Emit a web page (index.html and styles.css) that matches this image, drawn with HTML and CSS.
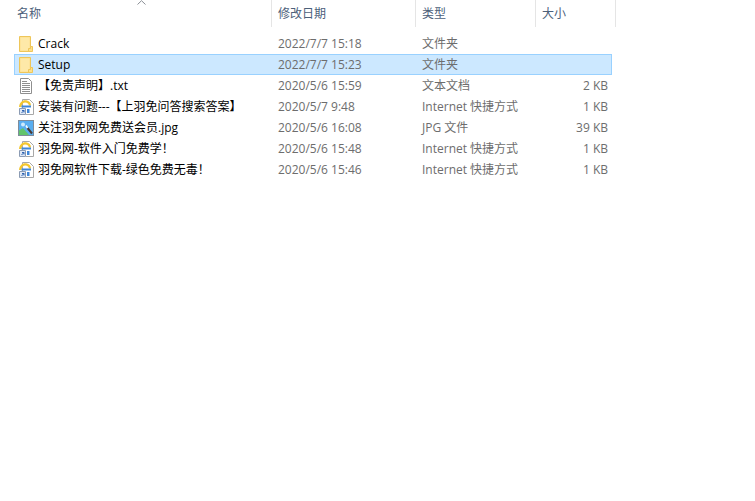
FILE: index.html
```html
<!DOCTYPE html>
<html lang="zh">
<head>
<meta charset="utf-8">
<title>文件列表</title>
<link rel="stylesheet" href="styles.css">
</head>
<body>
<svg class="defs" width="0" height="0" aria-hidden="true">
  <defs>
    <symbol id="folder" viewBox="0 0 16 16">
      <path d="M1.500 .5H12.500V15.500H1.500Z" fill="#fde08a" stroke="#eec65a"/>
      <path d="M2.500 1.500H11.500V14.500H2.500Z" fill="#fee9a8"/>
      <path d="M12.500 10.500H14.500V15.500H10.500V12.500H12.500Z" fill="#fde08a" stroke="#eec65a"/>
    </symbol>
    <symbol id="txt" viewBox="0 0 16 16">
      <path d="M2.500 .5H10.500L13.500 3.500V15.500H2.500Z" fill="#fff" stroke="#8f8f8f"/>
      <path d="M4 3.500H9M4 5.500H12M4 7.500H12M4 9.500H12M4 11.500H12M4 13.500H12" stroke="#8f8f8f"/>
    </symbol>
    <symbol id="link" viewBox="0 0 16 16">
      <path d="M4.500 .5H11.500L15.500 4.500V15.500H4.500Z" fill="#fff" stroke="#a8a8a8"/>
      <path d="M1 8C1.500 3 5 .5 9 1.500C11.500 2 13 4 13 6.500H11C10.500 4.500 9 3.500 7.500 3.500C5 3.500 3.500 5.500 3.500 8Z" fill="#f3c62f"/>
      <path d="M3.500 6.500H13V8.500H3.500Z" fill="#3f86d8"/>
      <rect x="1" y="9" width="7" height="7" fill="#fff"/>
      <path d="M1.500 9.500H7.500V15.500H1.500Z" fill="#dfe8f5" stroke="#8b9bb3"/>
      <path d="M3.500 14L6 11.500M4 11.500H6V13.500" stroke="#2f63b0" fill="none"/>
      <path d="M9 10H11.500V14H9Z" fill="#3f86d8"/>
    </symbol>
    <symbol id="jpg" viewBox="0 0 16 16">
      <rect x=".5" y=".5" width="15" height="15" fill="#5aaef0" stroke="#7f8c9a"/>
      <path d="M1 10.500L5 8L11 15H1Z" fill="#62c46a"/>
      <circle cx="5" cy="4.500" r="2" fill="#cfeafc"/>
      <path d="M9.500 8L14 13.500" stroke="#4a3b35" stroke-width="2"/>
      <path d="M8 5.500L9.500 8" stroke="#fff" stroke-width="1.500"/>
    </symbol>
  </defs>
</svg>
<main class="explorer">
  <header class="head">
    <svg class="sort" width="9" height="5" viewBox="0 0 9 5"><path d="M.5 4.500L4.500 .7L8.500 4.500" fill="none" stroke="#8a8f96"/></svg>
    <div class="hcell hname">名称</div>
    <div class="hcell hdate">修改日期</div>
    <div class="hcell htype">类型</div>
    <div class="hcell hsize">大小</div>
  </header>
  <section class="list">
    <div class="row"><span class="name"><svg class="ico"><use href="#folder"/></svg><span>Crack</span></span><span class="meta">2022/7/7 15:18</span><span class="meta">文件夹</span><span class="size"></span></div>
    <div class="row selected"><span class="name"><svg class="ico"><use href="#folder"/></svg><span>Setup</span></span><span class="meta">2022/7/7 15:23</span><span class="meta">文件夹</span><span class="size"></span></div>
    <div class="row"><span class="name"><svg class="ico"><use href="#txt"/></svg><span>【免责声明】.txt</span></span><span class="meta">2020/5/6 15:59</span><span class="meta">文本文档</span><span class="size">2 KB</span></div>
    <div class="row"><span class="name"><svg class="ico"><use href="#link"/></svg><span>安装有问题---【上羽免问答搜索答案】</span></span><span class="meta">2020/5/7 9:48</span><span class="meta">Internet 快捷方式</span><span class="size">1 KB</span></div>
    <div class="row"><span class="name"><svg class="ico"><use href="#jpg"/></svg><span>关注羽免网免费送会员.jpg</span></span><span class="meta">2020/5/6 16:08</span><span class="meta">JPG 文件</span><span class="size">39 KB</span></div>
    <div class="row"><span class="name"><svg class="ico"><use href="#link"/></svg><span>羽免网-软件入门免费学！</span></span><span class="meta">2020/5/6 15:48</span><span class="meta">Internet 快捷方式</span><span class="size">1 KB</span></div>
    <div class="row"><span class="name"><svg class="ico"><use href="#link"/></svg><span>羽免网软件下载-绿色免费无毒！</span></span><span class="meta">2020/5/6 15:46</span><span class="meta">Internet 快捷方式</span><span class="size">1 KB</span></div>
  </section>
</main>
</body>
</html>
```
FILE: styles.css
```css
* { box-sizing: border-box; }
html, body { margin: 0; padding: 0; background: #fff; }
body {
  font-family: "Open Sans", "Noto Sans CJK SC", sans-serif;
  font-size: 12px;
  overflow: hidden;
}
.defs { display: block; height: 0; }
.explorer { width: 755px; height: 501px; }
.head {
  position: relative;
  display: grid;
  grid-template-columns: 272px 144px 120px 80px;
  height: 27px;
}
.sort { position: absolute; left: 137px; top: 0; }
.hcell {
  padding-left: 6px;
  line-height: 27px;
  color: #4c607a;
  border-right: 1px solid #e5e5e5;
}
.hname { padding-left: 17px; }
.list { padding: 6px 0 0 14px; width: 612px; }
.row {
  display: grid;
  grid-template-columns: 258px 144px 120px 74px;
  height: 21px;
  line-height: 19px;
  border: 1px solid transparent;
}
.row.selected { background: #cce8ff; border-color: #99d1ff; }
.name { display: flex; align-items: center; color: #000; white-space: nowrap; }
.ico { width: 16px; height: 16px; margin: 0 4px 0 3px; flex: none; }
.meta { padding-left: 5px; color: #6d6d6d; white-space: nowrap; }
.size { padding-right: 3px; text-align: right; color: #6d6d6d; }
```
